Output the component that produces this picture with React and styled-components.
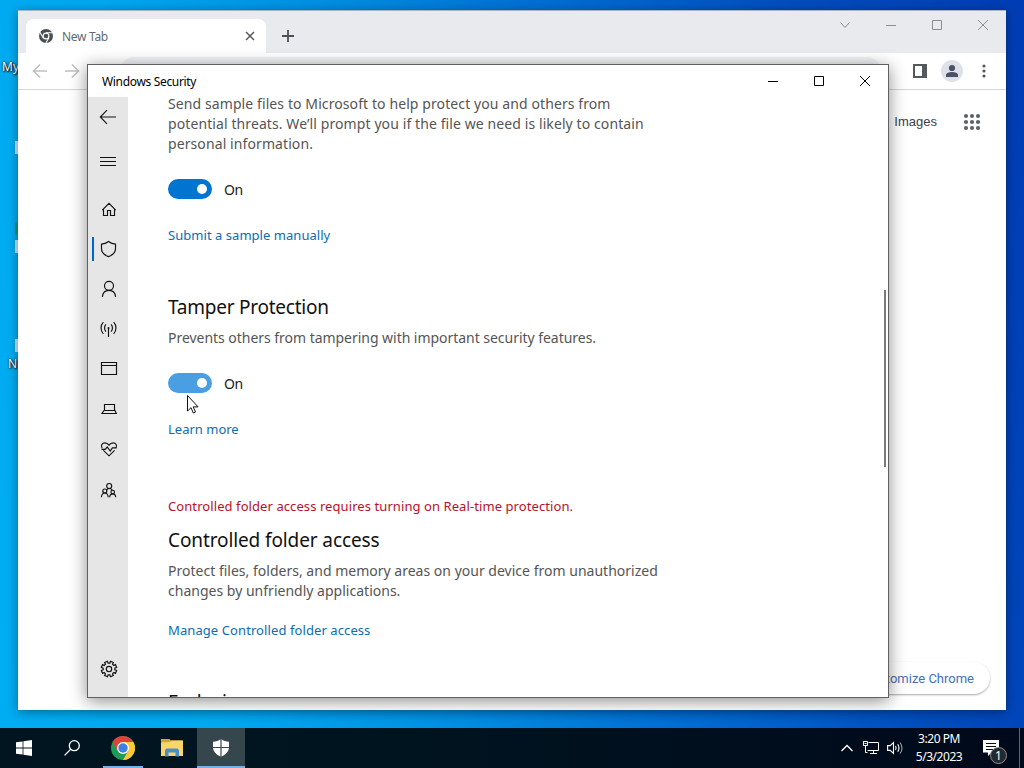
import styled, { createGlobalStyle } from 'styled-components'

const uiFont = `'Noto Sans', 'Open Sans', sans-serif`

const navItems = ['home', 'shield', 'person', 'antenna', 'window', 'laptop', 'heart', 'family']

const gearPath = () => {
  const points = []
  for (let i = 0; i < 8; i++) {
    const a = (i * Math.PI) / 4 + Math.PI / 8
    const steps = [[-0.2, 7.8], [0.2, 7.8], [0.24, 5.9], [Math.PI / 4 - 0.24, 5.9]]
    steps.forEach(([d, r]) => {
      points.push(`${(10 + r * Math.cos(a + d)).toFixed(2)} ${(10 + r * Math.sin(a + d)).toFixed(2)}`)
    })
  }
  return `M${points.join('L')}Z`
}

const navIcons = {
  home: <path d="M3.3 10.1L10 3.300l6.700 6.800M4.500 9.200v6.300h4v-5h3v5h4V9.200" />,
  shield: <path d="M9.500 1.500C7.600 3 5.200 4 2.500 4.100V8.600c0 4 3.200 6.700 7 8 3.800-1.300 7-4 7-8V4.100C13.800 4 11.400 3 9.500 1.500z" />,
  person: (
    <>
      <circle cx="10" cy="5.800" r="4.500" />
      <path d="M3.400 17c.3-4.200 3-6.700 6.600-6.700s6.300 2.500 6.600 6.700" />
    </>
  ),
  antenna: (
    <>
      <path d="M9.500 8v9M6.900 11.700c-1.800-2-1.800-5.400 0-7.400M12.100 11.700c1.800-2 1.800-5.400 0-7.400M4.300 13.800c-3-3.200-3-8.400 0-11.600M14.700 13.800c3-3.200 3-8.400 0-11.600" />
      <circle cx="9.500" cy="8" r="1" fill="currentColor" stroke="none" />
    </>
  ),
  window: <path d="M2.500 2.500h15v12h-15zM2.500 5.500h15" />,
  laptop: <path d="M5.500 10.500v-6h10v6M5 10.500h11l1.300 3H3z" />,
  heart: (
    <>
      <path d="M3.100 8.300C1.500 5.500 3.100 2.800 5.900 2.800c1.800 0 3.100.9 4.100 2.300 1-1.400 2.300-2.300 4.100-2.300 2.800 0 4.400 2.700 2.800 5.500M4.400 10.300l5.600 5.500 5.600-5.500" />
      <path d="M2.500 9.300h3.700l2-2.300 3 4 2.200-3.200h3.900" />
    </>
  ),
  family: (
    <>
      <circle cx="10.200" cy="6" r="2.500" />
      <circle cx="5.800" cy="11" r="2" />
      <circle cx="13.700" cy="12" r="1.800" />
      <path d="M2.400 17.300c.2-2.700 1.500-4.300 3.400-4.300s3.200 1.600 3.400 4.300M10.600 17.300c.2-2.200 1.400-3.500 3.100-3.500s2.900 1.300 3.100 3.500M7.800 10c.6-1 1.400-1.500 2.400-1.500 1.400 0 2.500.6 3.200 1.700" />
    </>
  ),
  gear: (
    <>
      <path d={gearPath()} />
      <circle cx="10" cy="10" r="2.700" />
    </>
  ),
}

const ControlGlyph = ({ kind }) => (
  <svg width="12" height="12" viewBox="0 0 12 12" fill="none" stroke="currentColor">
    {kind === 'chevron' && <path d="M1.500 3.500L6 8.500l4.500-5" />}
    {kind === 'minimize' && <path d="M1 6.500h10" />}
    {kind === 'maximize' && <path d="M1.500 1.500h9v9h-9z" />}
    {kind === 'close' && <path d="M1 1l10 10M11 1L1 11" />}
  </svg>
)

const ChromeLogo = () => (
  <svg width="24" height="24" viewBox="0 0 24 24">
    <circle cx="12" cy="12" r="12" fill="#1e9b55" />
    <path d="M1.600 6A12 12 0 0 1 22.400 6H12v6l-5.200 3z" fill="#dd4437" />
    <path d="M22.400 6A12 12 0 0 1 12 24l5.200-9L12 6z" fill="#fcc934" />
    <circle cx="12" cy="12" r="6" fill="#fff" />
    <circle cx="12" cy="12" r="4.700" fill="#3f7fe6" />
  </svg>
)

const ChromeMono = () => (
  <svg width="14" height="14" viewBox="0 0 24 24">
    <circle cx="12" cy="12" r="12" fill="#4b4f54" />
    <circle cx="12" cy="12" r="6" fill="#fff" />
    <path d="M12 6.300h11M7 15L1.600 5.600M17 15l-5.500 9.500" stroke="#fff" strokeWidth="1.800" />
    <circle cx="12" cy="12" r="4" fill="#4b4f54" />
  </svg>
)

function Browser() {
  return (
    <BrowserWindow>
      <TabStrip>
        <Tab>
          <ChromeMono />
          <TabTitle>New Tab</TabTitle>
          <svg width="10" height="10" viewBox="0 0 10 10" stroke="#55585c" strokeWidth="1.500">
            <path d="M1 1l8 8M9 1L1 9" />
          </svg>
        </Tab>
        <NewTab>
          <svg width="14" height="14" viewBox="0 0 14 14" stroke="#4c4f53" strokeWidth="1.800">
            <path d="M7 1v12M1 7h12" />
          </svg>
        </NewTab>
        <BrowserControls>
          {['chevron', 'minimize', 'maximize', 'close'].map((kind) => (
            <ControlButton key={kind} $height={28}><ControlGlyph kind={kind} /></ControlButton>
          ))}
        </BrowserControls>
      </TabStrip>
      <Toolbar>
        <svg width="16" height="16" viewBox="0 0 16 16" fill="none" stroke="#bfc1c4" strokeWidth="1.700">
          <path d="M15 8H2M8 1.500L1.500 8 8 14.500" />
        </svg>
        <svg width="16" height="16" viewBox="0 0 16 16" fill="none" stroke="#bfc1c4" strokeWidth="1.700">
          <path d="M1 8h13M8 1.500L14.500 8 8 14.500" />
        </svg>
        <AddressBar />
        <svg width="14" height="14" viewBox="0 0 14 14">
          <path d="M0 0h14v14H0z" fill="#55585c" />
          <path d="M2 2h7v10H2z" fill="#fff" />
        </svg>
        <Avatar>
          <svg width="14" height="14" viewBox="0 0 14 14" fill="#4b5166">
            <circle cx="7" cy="4" r="3.100" />
            <path d="M1 13v-2c0-2 3-3 6-3s6 1 6 3v2z" />
          </svg>
        </Avatar>
        <svg width="4" height="14" viewBox="0 0 4 14" fill="#55585c">
          <circle cx="2" cy="2" r="1.600" />
          <circle cx="2" cy="7" r="1.600" />
          <circle cx="2" cy="12" r="1.600" />
        </svg>
      </Toolbar>
      <NewTabPage>
        <PageLinks>
          <span>Images</span>
          <svg width="18" height="18" viewBox="0 0 18 18" fill="#5f6368">
            {[3, 9, 15].map((y) => [3, 9, 15].map((x) => <circle key={`${x}-${y}`} cx={x} cy={y} r="2.100" />))}
          </svg>
        </PageLinks>
        <Customize>Customize Chrome</Customize>
      </NewTabPage>
    </BrowserWindow>
  )
}

function NavIcon({ name }) {
  return (
    <svg width="20" height="20" viewBox="0 0 20 20" fill="none" stroke="currentColor" strokeWidth="1.150">
      {navIcons[name]}
    </svg>
  )
}

function Switch({ hover }) {
  return (
    <SwitchRow>
      <Track $hover={hover}><Knob /></Track>
      <span>On</span>
    </SwitchRow>
  )
}

function Security() {
  return (
    <SecurityWindow>
      <TitleBar>
        <WindowTitle>Windows Security</WindowTitle>
        {['minimize', 'maximize', 'close'].map((kind) => (
          <ControlButton key={kind} $height={32} $dark><ControlGlyph kind={kind} /></ControlButton>
        ))}
      </TitleBar>
      <Body>
        <Sidebar>
          <TopItem>
            <svg width="18" height="16" viewBox="0 0 18 16" fill="none" stroke="currentColor" strokeWidth="1.100">
              <path d="M17 8H1.500M8 1.200L1.300 8 8 14.800" />
            </svg>
          </TopItem>
          <TopItem>
            <svg width="18" height="16" viewBox="0 0 18 16" stroke="currentColor">
              <path d="M1 4.500h16M1 8.500h16M1 12.500h16" />
            </svg>
          </TopItem>
          <NavList>
            {navItems.map((name) => (
              <NavItem key={name} $active={name === 'shield'}><NavIcon name={name} /></NavItem>
            ))}
          </NavList>
          <NavItem><NavIcon name="gear" /></NavItem>
        </Sidebar>
        <Content>
          <Paragraph $spacing={0.095}>
            Send sample files to Microsoft to help protect you and others from<br />
            potential threats. We’ll prompt you if the file we need is likely to contain<br />
            personal information.
          </Paragraph>
          <Switch />
          <TextLink $top={26} $spacing={0.04}>Submit a sample manually</TextLink>
          <Heading $top={48} $spacing={-0.24}>Tamper Protection</Heading>
          <Paragraph $top={7} $spacing={-0.035}>Prevents others from tampering with important security features.</Paragraph>
          <Switch hover />
          <TextLink $top={26}>Learn more</TextLink>
          <Warning>Controlled folder access requires turning on Real-time protection.</Warning>
          <Heading $top={10} $spacing={-0.11}>Controlled folder access</Heading>
          <Paragraph $top={7} $spacing={0.01}>
            Protect files, folders, and memory areas on your device from unauthorized<br />
            changes by unfriendly applications.
          </Paragraph>
          <TextLink $top={19} $spacing={0.09}>Manage Controlled folder access</TextLink>
          <Heading $top={48} $spacing={-0.2}>Exclusions</Heading>
        </Content>
        <ScrollRail><ScrollThumb /></ScrollRail>
      </Body>
    </SecurityWindow>
  )
}

function Taskbar() {
  return (
    <Bar>
      <TaskButton>
        <svg width="16" height="16" viewBox="0 0 16 16" fill="#fff">
          <path d="M0 2.300L6.600 1.400v6.200H0zM7.400 1.300L16 0v7.600H7.400zM0 8.400h6.600v6.200L0 13.700zM7.400 8.400H16V16l-8.600-1.300z" />
        </svg>
      </TaskButton>
      <TaskButton>
        <svg width="16" height="16" viewBox="0 0 16 16" fill="none" stroke="#fff" strokeWidth="1.300">
          <circle cx="10.300" cy="5.700" r="5" />
          <path d="M6.700 9.300L.6 15.400" />
        </svg>
      </TaskButton>
      <Pinned>
        <TaskButton $line={40}><ChromeLogo /></TaskButton>
        <TaskButton>
          <svg width="22" height="18" viewBox="0 0 22 18">
            <path d="M0 0h8.500L10 1.500h11.500V5H0z" fill="#dda033" />
            <path d="M0 3.500L9 3l1.500-1.500H22V17H0z" fill="#f9d56c" />
            <path d="M4 17.500V11l1.500-1.500h11L18 11v6.500h-3.500V13.500h-7v4z" fill="#4a90c4" />
          </svg>
        </TaskButton>
        <TaskButton $open $line={48}>
          <svg width="18" height="20" viewBox="0 0 18 20">
            <path d="M9 1C6.500 3 4 3.700 1 3.700V9c0 5 4 8 8 9.800C13 17 17 14 17 9V3.700C14 3.700 11.500 3 9 1z" fill="#fff" />
            <path d="M9 0v20M0 9.500h18" stroke="#35464d" strokeWidth="1.200" />
          </svg>
        </TaskButton>
      </Pinned>
      <Tray>
        <svg width="12" height="8" viewBox="0 0 12 8" fill="none" stroke="#fff" strokeWidth="1.300">
          <path d="M.5 7L6 1.500 11.500 7" />
        </svg>
        <NetworkIcon width="17" height="14" viewBox="0 0 17 14" fill="none" stroke="#fff">
          <path d="M5.500 1.500h10v8h-11M.5.500h4v4h-4zM2.500 4.500v7h2M10.500 9.500v3M7 12.500h7M1.500 2.500h2" />
        </NetworkIcon>
        <svg width="17" height="14" viewBox="0 0 17 14" fill="none" stroke="#fff" strokeWidth="1.100">
          <path d="M.6 4.600h2.600L6.500 1.500v11L3.200 9.400H.6z" />
          <path d="M8.500 5q1.300 2 0 4M10.700 3.200q2.600 3.800 0 7.600" />
          <path d="M13 1.500q4 5.500 0 11" opacity="0.600" />
        </svg>
        <Clock>
          <span>3:20 PM</span>
          <span>5/3/2023</span>
        </Clock>
        <Notifications>
          <svg width="17" height="17" viewBox="0 0 17 17">
            <path d="M0 0h16v12.500H8.500L5 16v-3.500H0z" fill="#fff" />
            <path d="M3 3.500h10M3 6.500h10M3 9.500h7" stroke="#061019" />
          </svg>
          <Badge>1</Badge>
        </Notifications>
        <ShowDesktop />
      </Tray>
    </Bar>
  )
}

export default function App() {
  return (
    <Desktop>
      <GlobalStyle />
      <DesktopLabel $x={2} $y={59}>My</DesktopLabel>
      <DesktopSliver $y={141} />
      <DesktopSliver $y={222} $green />
      <DesktopSliver $y={240} />
      <DesktopSliver $y={339} />
      <DesktopLabel $x={8} $y={356}>N</DesktopLabel>
      <Browser />
      <Security />
      <Pointer width="14" height="20" viewBox="0 0 14 20">
        <path d="M.5.500v15.500l3.500-3.300 2.300 5.300 2.200-1-2.300-5.100h4.900z" fill="#fff" stroke="#111" />
      </Pointer>
      <Taskbar />
    </Desktop>
  )
}

const GlobalStyle = createGlobalStyle`
  * {
    box-sizing: border-box;
  }
  body {
    margin: 0;
    overflow: hidden;
    font-family: ${uiFont};
  }
  svg {
    display: block;
    flex-shrink: 0;
  }
`
const Desktop = styled.div`
  position: relative;
  display: flex;
  flex-direction: column;
  justify-content: flex-end;
  width: 1024px;
  height: 768px;
  overflow: hidden;
  background: linear-gradient(80deg, #00adf2 0%, #00a8f0 20%, #0091e4 38%, #006fd3 58%, #004dbe 80%, #003cb4 100%);
`
const DesktopLabel = styled.span`
  position: absolute;
  left: ${(p) => p.$x}px;
  top: ${(p) => p.$y}px;
  font-size: 12px;
  line-height: 16px;
  color: #fff;
  text-shadow: 1px 1px 2px #000, 0 0 2px #000;
`
const DesktopSliver = styled.div`
  position: absolute;
  left: 15px;
  top: ${(p) => p.$y}px;
  width: 3px;
  height: 13px;
  background: ${(p) => (p.$green ? '#1a9b72' : '#c9e4f5')};
`
const BrowserWindow = styled.div`
  position: absolute;
  left: 18px;
  top: 10px;
  width: 988px;
  height: 700px;
  display: flex;
  flex-direction: column;
  border-top: 1px solid #a9b4c2;
  background: #fff;
  box-shadow: 0 2px 10px rgba(0, 0, 0, 0.4);
`
const TabStrip = styled.div`
  display: flex;
  align-items: flex-end;
  height: 42px;
  padding-left: 8px;
  background: #e8eaed;
`
const Tab = styled.div`
  display: flex;
  align-items: center;
  width: 240px;
  height: 34px;
  padding: 0 11px 0 13px;
  border-radius: 8px 8px 0 0;
  background: #fff;
`
const TabTitle = styled.span`
  flex: 1;
  margin-left: 9px;
  font-size: 12px;
  letter-spacing: -0.3px;
  color: #66696d;
`
const NewTab = styled.div`
  display: flex;
  align-items: center;
  height: 34px;
  margin-left: 15px;
`
const BrowserControls = styled.div`
  display: flex;
  align-self: flex-start;
  margin-left: auto;
  color: #8b8e92;
`
const ControlButton = styled.div`
  display: flex;
  align-items: center;
  justify-content: center;
  width: 46px;
  height: ${(p) => p.$height}px;
  color: ${(p) => (p.$dark ? '#000' : 'inherit')};
`
const Toolbar = styled.div`
  display: flex;
  align-items: center;
  height: 37px;
  padding: 0 20px 0 14px;
  gap: 16px;
  border-bottom: 1px solid #d5d7da;
`
const AddressBar = styled.div`
  flex: 1;
  height: 28px;
  margin: 0 16px 0 24px;
  border-radius: 14px;
  background: #f1f3f4;
`
const Avatar = styled.div`
  display: flex;
  align-items: center;
  justify-content: center;
  width: 22px;
  height: 22px;
  margin: 0 3px 0 -2px;
  border-radius: 50%;
  background: #dfe1e8;
`
const NewTabPage = styled.div`
  flex: 1;
  display: flex;
  flex-direction: column;
  align-items: flex-end;
  justify-content: space-between;
  padding: 23px 16px 16px 0;
`
const PageLinks = styled.div`
  display: flex;
  align-items: center;
  gap: 26px;
  padding-right: 9px;
  font-family: 'Liberation Sans', Arial, sans-serif;
  font-size: 13px;
  color: #3c4043;

  span {
    padding-bottom: 2px;
  }
`
const Customize = styled.div`
  display: flex;
  align-items: center;
  height: 32px;
  padding: 0 16px 0 40px;
  border-radius: 16px;
  background: #fff;
  box-shadow: 0 1px 2px rgba(0, 0, 0, 0.35);
  font-family: Roboto, sans-serif;
  font-size: 13px;
  color: #4a6db8;
`
const SecurityWindow = styled.div`
  position: absolute;
  left: 87px;
  top: 64px;
  width: 802px;
  height: 634px;
  display: flex;
  flex-direction: column;
  border: 1px solid #5f6163;
  background: #fff;
  box-shadow: 0 3px 16px rgba(0, 0, 0, 0.45);
`
const TitleBar = styled.div`
  display: flex;
  height: 32px;
  padding-left: 14px;
`
const WindowTitle = styled.span`
  flex: 1;
  padding-top: 1px;
  font-size: 12px;
  line-height: 32px;
  letter-spacing: -0.33px;
  color: #000;
`
const Body = styled.div`
  flex: 1;
  display: flex;
  min-height: 0;
`
const Sidebar = styled.div`
  display: flex;
  flex-direction: column;
  width: 40px;
  padding-bottom: 8px;
  background: #e6e6e6;
  color: #111;
`
const TopItem = styled.div`
  display: flex;
  align-items: center;
  height: 40px;
  margin-bottom: 4px;
  padding-left: 11px;
`
const NavList = styled.div`
  flex: 1;
  padding-top: 5px;
`
const NavItem = styled.div`
  display: flex;
  align-items: center;
  height: 40px;
  padding-left: ${(p) => (p.$active ? 4 : 11)}px;

  &::before {
    content: '';
    display: ${(p) => (p.$active ? 'block' : 'none')};
    width: 2px;
    height: 24px;
    margin: 0 5px 2px 0;
    background: #0067c0;
  }
`
const Content = styled.div`
  flex: 1;
  min-width: 0;
  margin-top: -3px;
  padding-left: 40px;
  overflow: hidden;
  clip-path: inset(3px 0 0 0);
`
const Paragraph = styled.p`
  margin: ${(p) => p.$top || 0}px 0 0;
  font-size: 14px;
  line-height: 20px;
  letter-spacing: ${(p) => p.$spacing}px;
  color: #555;
  white-space: nowrap;
`
const SwitchRow = styled.div`
  display: flex;
  align-items: center;
  gap: 12px;
  height: 20px;
  margin-top: 25px;
  font-size: 14px;
  letter-spacing: -0.4px;
  color: #1a1a1a;
`
const Track = styled.div`
  display: flex;
  align-items: center;
  justify-content: flex-end;
  width: 44px;
  height: 20px;
  padding-right: 5px;
  border-radius: 10px;
  background: ${(p) => (p.$hover ? '#4a9fe3' : '#0074d1')};
`
const Knob = styled.div`
  width: 10px;
  height: 10px;
  border-radius: 50%;
  background: #fff;
`
const TextLink = styled.a`
  display: block;
  margin-top: ${(p) => p.$top}px;
  font-size: 13px;
  line-height: 20px;
  letter-spacing: ${(p) => p.$spacing || 0}px;
  color: #0a6db3;
`
const Warning = styled.p`
  margin: 57px 0 0;
  font-size: 13px;
  line-height: 20px;
  letter-spacing: 0.08px;
  color: #b5122b;
`
const Heading = styled.h2`
  margin: ${(p) => p.$top}px 0 0;
  font-size: 19px;
  font-weight: 400;
  line-height: 28px;
  letter-spacing: ${(p) => p.$spacing}px;
  color: #111;
`
const ScrollRail = styled.div`
  width: 4px;
  padding-top: 193px;
`
const ScrollThumb = styled.div`
  width: 2px;
  height: 177px;
  background: #7a7a7a;
`
const Pointer = styled.svg`
  position: absolute;
  left: 187px;
  top: 395px;
`
const Bar = styled.div`
  display: flex;
  height: 40px;
  background: linear-gradient(90deg, #00151f, #001420 40%, #00091a 100%);
`
const Pinned = styled.div`
  display: flex;
  gap: 1px;
  margin-left: 3px;
`
const TaskButton = styled.div`
  display: flex;
  align-items: center;
  justify-content: center;
  width: 48px;
  height: 40px;
  background-color: ${(p) => (p.$open ? '#35464d' : 'transparent')};
  background-image: ${(p) => (p.$line ? 'linear-gradient(#76b0e6, #76b0e6)' : 'none')};
  background-size: ${(p) => p.$line || 0}px 2px;
  background-position: bottom center;
  background-repeat: no-repeat;
`
const Tray = styled.div`
  display: flex;
  align-items: center;
  margin-left: auto;
  gap: 9px;
`
const NetworkIcon = styled.svg`
  margin: 0 -2px 0 1px;
`
const Clock = styled.div`
  display: flex;
  flex-direction: column;
  align-items: center;
  width: 56px;
  margin-left: -2px;
  font-size: 12px;
  line-height: 18px;
  letter-spacing: -0.45px;
  color: #fff;
`
const Notifications = styled.div`
  position: relative;
  margin-left: 7px;
`
const Badge = styled.span`
  position: absolute;
  left: 7px;
  top: 7px;
  width: 17px;
  height: 17px;
  border: 1px solid #8b8f94;
  border-radius: 50%;
  background: #25292e;
  font-size: 12px;
  line-height: 15px;
  text-align: center;
  color: #fff;
`
const ShowDesktop = styled.div`
  width: 5px;
  height: 40px;
  margin-left: 10px;
  border-left: 1px solid #5d6570;
`
